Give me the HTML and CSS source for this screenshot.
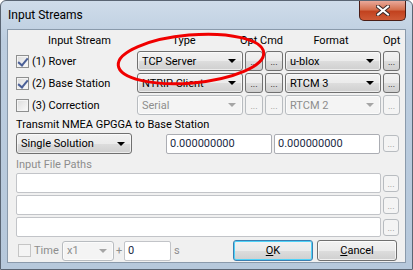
FILE: index.html
```html
<!DOCTYPE html>
<html lang="en">
<head>
  <meta charset="UTF-8">
  <title>Input Streams</title>
  <link rel="stylesheet" href="styles.css">
</head>
<body>
  <div class="window">
    <div class="titlebar">
      <span class="title">Input Streams</span>
      <div class="close">
        <svg width="14" height="11" viewBox="0 0 14 11">
          <path d="M2 1.5 L12 9.5 M12 1.5 L2 9.5" stroke="#3a2a2a" stroke-width="4" stroke-linecap="square"/>
          <path d="M2 1.5 L12 9.5 M12 1.5 L2 9.5" stroke="#fff" stroke-width="2" stroke-linecap="square"/>
        </svg>
      </div>
    </div>

    <div class="client">
      <div class="streams">
        <span class="hdr h-stream">Input Stream</span>
        <span class="hdr h-type">Type</span>
        <span class="hdr h-optcmd">Opt Cmd</span>
        <span class="hdr h-format">Format</span>
        <span class="hdr h-opt">Opt</span>

        <label class="check-row"><span class="check on"></span>(1) Rover</label>
        <div class="combo"><span>TCP Server</span><i class="arrow"></i></div>
        <button class="dots">...</button>
        <button class="dots">...</button>
        <div class="combo"><span>u-blox</span><i class="arrow"></i></div>
        <button class="dots">...</button>

        <label class="check-row"><span class="check on"></span>(2) Base Station</label>
        <div class="combo"><span>NTRIP Client</span><i class="arrow"></i></div>
        <button class="dots">...</button>
        <button class="dots">...</button>
        <div class="combo"><span>RTCM 3</span><i class="arrow"></i></div>
        <button class="dots">...</button>

        <label class="check-row"><span class="check"></span>(3) Correction</label>
        <div class="combo off"><span>Serial</span><i class="arrow"></i></div>
        <button class="dots off">...</button>
        <button class="dots off">...</button>
        <div class="combo off"><span>RTCM 2</span><i class="arrow"></i></div>
        <button class="dots off">...</button>
      </div>

      <p class="caption">Transmit NMEA GPGGA to Base Station</p>
      <div class="nmea-row">
        <div class="combo nmea-combo"><span>Single Solution</span><i class="arrow"></i></div>
        <div class="edit pos">0.000000000</div>
        <div class="edit pos">0.000000000</div>
        <button class="dots small off">...</button>
      </div>

      <p class="caption off">Input File Paths</p>
      <div class="file-row">
        <div class="edit path off"></div>
        <button class="dots small off">...</button>
      </div>
      <div class="file-row">
        <div class="edit path off"></div>
        <button class="dots small off">...</button>
      </div>
      <div class="file-row">
        <div class="edit path off"></div>
        <button class="dots small off">...</button>
      </div>

      <div class="bottom-row">
        <label class="check-row time off"><span class="check off"></span>Time</label>
        <div class="combo off speed"><span>x1</span><i class="arrow"></i></div>
        <span class="plus">+</span>
        <div class="edit offset off">0</div>
        <span class="unit">s</span>
        <button class="btn default"><u>O</u>K</button>
        <button class="btn"><u>C</u>ancel</button>
      </div>
    </div>

    <svg class="mark" width="413" height="270" viewBox="0 0 413 270">
      <ellipse cx="191" cy="59" rx="73" ry="24" transform="rotate(-5 191 59)" fill="none" stroke="#f00000" stroke-width="3"/>
    </svg>
  </div>
</body>
</html>
```

FILE: styles.css
```css
:root {
  --face: #f0f0f0;
  --border: #707070;
  --border-off: #b8bcc0;
  --text-off: #8d8d8d;
  --edit-border: #abadb3;
}

* {
  box-sizing: border-box;
  margin: 0;
  padding: 0;
}

body {
  margin: 0;
  width: 413px;
  height: 270px;
  overflow: hidden;
  font-family: Roboto, "Open Sans", sans-serif;
  font-size: 11px;
  color: #000;
}

.window {
  position: relative;
  width: 413px;
  height: 270px;
  border: 1px solid #5a6573;
  border-radius: 6px 6px 0 0;
  background: linear-gradient(#cfdcea, #bccddf 40px, #b6c8db);
  padding: 0 6px 6px 6px;
  display: flex;
  flex-direction: column;
}

.titlebar {
  height: 28px;
  display: flex;
  justify-content: space-between;
  align-items: flex-start;
}

.title {
  margin: 7px 0 0 1px;
  font-size: 12px;
}

.close {
  width: 47px;
  height: 20px;
  margin-right: 0;
  border: 1px solid #4a1d16;
  border-top: 0;
  border-radius: 0 0 5px 5px;
  background: linear-gradient(#e9a99a, #d4704f 45%, #c2421f 55%, #cf5a36);
  display: flex;
  align-items: center;
  justify-content: center;
}

.client {
  flex: 1;
  background: var(--face);
  border: 1px solid #8a9aab;
  padding: 3px 0 0 8px;
}

/* input stream table */
.streams {
  display: grid;
  grid-template-columns: 119px 106px 18px 18px 96px 17px;
  grid-template-rows: 16px repeat(3, 20px);
  column-gap: 2px;
  row-gap: 2px;
}

.hdr {
  white-space: nowrap;
  line-height: 16px;
}

.h-stream {
  text-align: center;
  padding-left: 8px;
}

.h-type {
  text-align: center;
  padding-right: 12px;
}

.h-optcmd {
  grid-column: 3 / 5;
  margin-left: -6px;
  text-align: right;
}

.h-format {
  text-align: center;
  padding-right: 4px;
}

.h-opt {
  text-align: right;
  margin-right: 2px;
}

.check-row {
  display: flex;
  align-items: center;
  gap: 3px;
  white-space: nowrap;
}

.check {
  width: 13px;
  height: 13px;
  border: 1px solid #8e8f8f;
  background: linear-gradient(135deg, #dcdcdc, #fbfbfb);
  box-shadow: inset 0 0 0 1px #f4f4f4;
  position: relative;
}

.check.on::after {
  content: "";
  position: absolute;
  left: 3px;
  top: 0px;
  width: 4px;
  height: 8px;
  border: solid #4a5f97;
  border-width: 0 2px 2px 0;
  transform: rotate(40deg);
}

.check.off {
  border-color: #c5c5c5;
  background: #f4f4f4;
}

.combo {
  height: 20px;
  border: 1px solid var(--border);
  border-radius: 3px;
  background: linear-gradient(#f2f2f2, #ebebeb 50%, #dddddd 51%, #cfcfcf);
  box-shadow: inset 0 0 0 1px rgba(255, 255, 255, 0.6);
  display: flex;
  align-items: center;
  justify-content: space-between;
  padding: 0 6px 0 4px;
  white-space: nowrap;
}

.combo.off {
  border-color: var(--border-off);
  background: #f4f4f4;
  color: var(--text-off);
}

.arrow {
  width: 0;
  height: 0;
  border-left: 4px solid transparent;
  border-right: 4px solid transparent;
  border-top: 4px solid #000;
}

.combo.off .arrow {
  border-top-color: #a5a5a5;
}

.dots {
  height: 20px;
  border: 1px solid var(--border);
  border-radius: 3px;
  background: linear-gradient(#f2f2f2, #ebebeb 50%, #dddddd 51%, #cfcfcf);
  font-family: inherit;
  font-size: 9px;
  line-height: 1;
  padding-top: 2px;
  color: #000;
}

.dots.off {
  border-color: var(--border-off);
  background: #f4f4f4;
  color: var(--text-off);
}

.dots.small {
  width: 16px;
  height: 17px;
}

.caption {
  margin-top: 2px;
  line-height: 16px;
  white-space: nowrap;
}

.caption.off {
  color: var(--text-off);
  margin-top: 3px;
}

.nmea-row {
  display: flex;
  align-items: center;
  height: 21px;
}

.nmea-combo {
  width: 116px;
  height: 21px;
  margin-right: 34px;
}

.edit {
  height: 20px;
  background: #fff;
  border: 1px solid var(--edit-border);
  border-radius: 2px;
  padding: 0 3px;
  line-height: 18px;
  color: #1b2b44;
}

.pos {
  width: 106px;
  margin-right: 2px;
}

.nmea-row .dots.small {
  margin-left: 1px;
}

.file-row {
  display: flex;
  align-items: center;
  gap: 2px;
  height: 20px;
  margin-bottom: 2px;
}

.path {
  width: 365px;
}

.edit.off {
  border-color: #c2c4c8;
}

.bottom-row {
  display: flex;
  align-items: center;
  height: 21px;
  margin-top: 3px;
}

.time {
  margin-left: 2px;
  width: 44px;
  color: var(--text-off);
}

.speed {
  width: 52px;
}

.plus {
  width: 10px;
  text-align: center;
  color: var(--text-off);
}

.offset {
  width: 47px;
}

.unit {
  margin-left: 3px;
  width: 59px;
  color: var(--text-off);
}

.btn {
  width: 80px;
  height: 21px;
  border: 1px solid var(--border);
  border-radius: 3px;
  background: linear-gradient(#f2f2f2, #ebebeb 50%, #dddddd 51%, #cfcfcf);
  box-shadow: inset 0 0 0 1px rgba(255, 255, 255, 0.7);
  font-family: inherit;
  font-size: 11px;
  color: #000;
  margin-right: 4px;
}

.btn.default {
  border-color: #3c7fb1;
  box-shadow: inset 0 0 0 1px #4fd2f8;
}

.mark {
  position: absolute;
  left: -1px;
  top: -1px;
  pointer-events: none;
}
```
